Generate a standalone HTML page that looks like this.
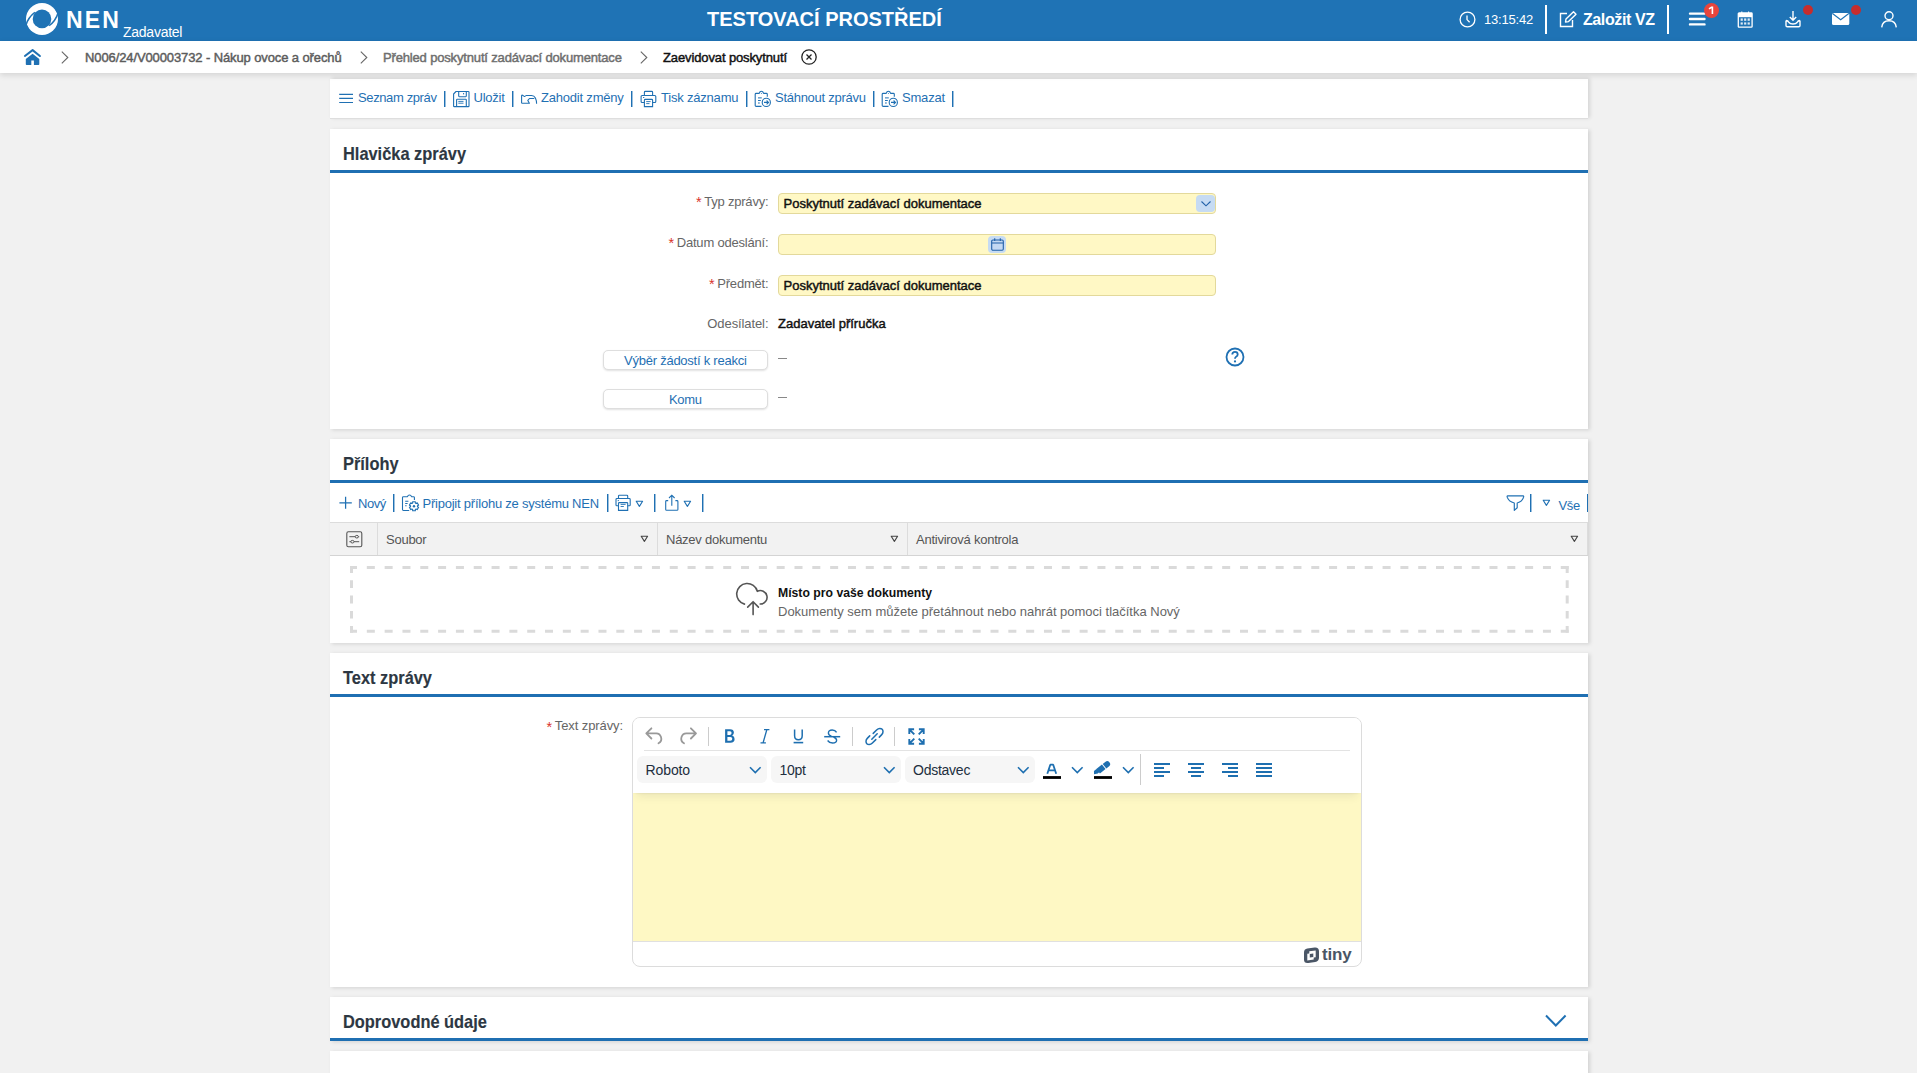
<!DOCTYPE html>
<html lang="cs">
<head>
<meta charset="utf-8">
<title>NEN</title>
<style>
*{box-sizing:border-box;margin:0;padding:0}
html,body{width:1917px;height:1073px;overflow:hidden}
body{background:#f1f1f1;font-family:"Liberation Sans",sans-serif;color:#222;position:relative}
.a{position:absolute}
.t{position:absolute;line-height:1;white-space:nowrap;z-index:3}
svg{position:absolute;overflow:visible}
#hdr{left:0;top:0;width:1917px;height:41px;background:#1f73b5}
#bc{left:0;top:41px;width:1917px;height:32px;background:#fff;box-shadow:0 2px 6px rgba(0,0,0,.13);z-index:2}
.card{position:absolute;left:330px;width:1258px;background:#fff;box-shadow:1.5px 1px 4px rgba(0,0,0,.13)}
.sec{font-size:18.5px;font-weight:bold;color:#2d3742;-webkit-text-stroke:0.15px #2d3742;transform:scaleX(.886);transform-origin:0 0}
.med{-webkit-text-stroke:0.45px currentColor}
.bl{position:absolute;left:0;width:1258px;height:3px;background:#1f6fb2}
.lnk{color:#1f70b3;font-size:13px}
.sep{position:absolute;width:1px;height:16px;background:#1f70b3;box-shadow:1px 0 0 rgba(31,112,179,.45);z-index:3}
.lbl{color:#666;font-size:13px}
.req{color:#d9342b;font-size:14.5px;margin-right:2.6px;letter-spacing:0;position:relative;top:1.3px;line-height:0}
.inp{position:absolute;left:778px;width:438px;height:21px;background:#fff8c5;border:1px solid #e3d99b;border-radius:4px}
.btn{position:absolute;left:603px;width:165px;height:19.6px;background:#fff;border:1px solid #dedede;border-radius:5px;box-shadow:0 1px 2px rgba(0,0,0,.12)}
</style>
</head>
<body>
<!-- HEADER -->
<div id="hdr" class="a">
  <svg width="40" height="40" style="left:22px;top:0px" viewBox="0 0 40 40">
    <circle cx="20" cy="19" r="16" fill="#fff"/>
    <circle cx="20" cy="18.9" r="9.3" fill="#1f73b5"/>
    <path d="M3.8 25.5 Q6.3 17 12.9 12.3" stroke="#1f73b5" stroke-width="1.5" fill="none"/>
    <path d="M36.2 12.5 Q33.7 21 27.1 25.7" stroke="#1f73b5" stroke-width="1.5" fill="none"/>
    <path d="M4.3 24.2 L6.9 28.4 L1 29 Z M35.7 13.8 L33.1 9.6 L39 9 Z" fill="#1f73b5"/>
  </svg>
  <span class="t" style="left:66px;top:8.5px;font-size:23px;font-weight:bold;color:#fff;letter-spacing:2.2px">NEN</span>
  <span class="t" style="left:123px;top:25px;font-size:14px;color:#fff;letter-spacing:-0.25px">Zadavatel</span>
  <span class="t" style="left:707px;top:8.5px;font-size:20px;font-weight:bold;color:#fff;letter-spacing:0px">TESTOVACÍ PROSTŘEDÍ</span>
  <!-- clock -->
  <svg width="17" height="17" style="left:1459px;top:11px" viewBox="0 0 17 17"><circle cx="8.5" cy="8.5" r="7.4" stroke="#fff" stroke-width="1.3" fill="none"/><path d="M8 4.5 V8.6 L10.6 11.3" stroke="#fff" stroke-width="1.3" fill="none"/></svg>
  <span class="t" style="left:1484px;top:13px;font-size:13px;color:#fff;letter-spacing:-0.2px">13:15:42</span>
  <div class="a" style="left:1545px;top:5px;width:2px;height:29px;background:#fff"></div>
  <!-- edit -->
  <svg width="18" height="17" style="left:1559px;top:11px" viewBox="0 0 18 17"><path d="M8 2.5 H1.5 V15.5 H13.5 V9" stroke="#fff" stroke-width="1.4" fill="none"/><path d="M6.5 11 L7 8 L14.5 0.8 L17 3.3 L9.5 10.6 Z" stroke="#fff" stroke-width="1.4" fill="none" stroke-linejoin="round"/></svg>
  <span class="t" style="left:1583px;top:11.5px;font-size:16px;font-weight:bold;color:#fff;letter-spacing:-0.4px">Založit VZ</span>
  <div class="a" style="left:1667px;top:5px;width:2px;height:29px;background:#fff"></div>
  <!-- hamburger -->
  <svg width="17" height="15" style="left:1689px;top:12px" viewBox="0 0 17 15"><path d="M1 1.6 H15.5 M1 7 H15.5 M1 12.4 H15.5" stroke="#fff" stroke-width="2.4" stroke-linecap="round"/></svg>
  <div class="a" style="left:1704px;top:3px;width:15px;height:15px;border-radius:50%;background:#e8453c"></div>
  <svg width="15" height="15" style="left:1704px;top:3px" viewBox="0 0 15 15"><path d="M5 5.9 L7.5 4.3 H8.4 V11" stroke="#fff" stroke-width="1.6" fill="none" stroke-linejoin="miter"/></svg>
  <!-- calendar -->
  <svg width="17" height="17" style="left:1736.5px;top:10.5px" viewBox="0 0 17 17"><path d="M1.3 2.8 Q1.3 2 2.1 2 H14.3 Q15.1 2 15.1 2.8 V15.4 Q15.1 16.2 14.3 16.2 H2.1 Q1.3 16.2 1.3 15.4 Z" stroke="#fff" stroke-width="1.3" fill="none"/><rect x="1.3" y="2" width="13.8" height="4.2" fill="#fff"/><path d="M4.8 0.4 V3.4 M11.6 0.4 V3.4" stroke="#fff" stroke-width="1.1"/><path d="M4.8 2 V3.2 M11.6 2 V3.2" stroke="#1f73b5" stroke-width="2.2" opacity="0"/><g fill="#fff" opacity=".85"><rect x="3.6" y="7.4" width="2.2" height="2.4"/><rect x="7.1" y="7.4" width="2.2" height="2.4"/><rect x="10.6" y="7.4" width="2.2" height="2.4"/><rect x="3.6" y="11.4" width="2.2" height="2.2"/><rect x="7.1" y="11.4" width="2.2" height="2.2"/><rect x="10.6" y="11.4" width="2.2" height="2.2"/></g></svg>
  <!-- download -->
  <svg width="17" height="17" style="left:1785px;top:11px" viewBox="0 0 17 17"><path d="M8 0 V9 M4.8 6 L8 9.2 L11.2 6" stroke="#fff" stroke-width="1.4" fill="none"/><path d="M1 9.5 V14.5 Q1 15.8 2.3 15.8 H13.7 Q15 15.8 15 14.5 V9.5 M1 9.5 Q3 9.5 4 11.5 Q5 13 8 13 Q11 13 12 11.5 Q13 9.5 15 9.5" stroke="#fff" stroke-width="1.4" fill="none"/></svg>
  <div class="a" style="left:1803px;top:5px;width:10px;height:10px;border-radius:50%;background:#c62d2d"></div>
  <!-- mail -->
  <svg width="18" height="13" style="left:1832px;top:13px" viewBox="0 0 18 13"><rect x="0" y="0" width="17.3" height="12" rx="1.5" fill="#fff"/><path d="M0.5 0.5 L8.65 6.7 L16.8 0.5" stroke="#1f73b5" stroke-width="1.1" fill="none"/></svg>
  <div class="a" style="left:1851px;top:5px;width:10px;height:10px;border-radius:50%;background:#c62d2d"></div>
  <!-- user -->
  <svg width="16" height="17" style="left:1881px;top:11px" viewBox="0 0 16 17"><circle cx="8" cy="4.8" r="4" stroke="#fff" stroke-width="1.4" fill="none"/><path d="M0.7 16.3 Q1.5 9.8 8 9.8 Q14.5 9.8 15.3 16.3" stroke="#fff" stroke-width="1.4" fill="none"/></svg>
</div>

<!-- BREADCRUMB -->
<div id="bc" class="a">
  <svg width="17" height="17" style="left:23.5px;top:7.5px" viewBox="0 0 17 17"><path d="M0.9 7 L8.6 1.1 L15.9 7" stroke="#1f70b3" stroke-width="2" fill="none" stroke-linecap="round" stroke-linejoin="round"/><path d="M8.6 4.8 L15.3 10 V15.3 Q15.3 16.1 14.5 16.1 H9.9 V11.4 H7.3 V16.1 H2.6 Q1.8 16.1 1.8 15.3 V10 Z" fill="#1f70b3"/></svg>
  <svg width="8" height="13" style="left:61px;top:9.6px" viewBox="0 0 8 13"><path d="M0.8 0.6 L6.8 6.5 L0.8 12.4" stroke="#666" stroke-width="1.1" fill="none"/></svg>
  <span class="t med" style="left:85px;top:10px;font-size:13px;color:#5c5c5c;letter-spacing:-0.11px">N006/24/V00003732 - Nákup ovoce a ořechů</span>
  <svg width="8" height="13" style="left:359.5px;top:9.6px" viewBox="0 0 8 13"><path d="M0.8 0.6 L6.8 6.5 L0.8 12.4" stroke="#666" stroke-width="1.1" fill="none"/></svg>
  <span class="t med" style="left:383px;top:10px;font-size:13px;color:#6e6e6e;letter-spacing:-0.16px">Přehled poskytnutí zadávací dokumentace</span>
  <svg width="8" height="13" style="left:639.5px;top:9.6px" viewBox="0 0 8 13"><path d="M0.8 0.6 L6.8 6.5 L0.8 12.4" stroke="#666" stroke-width="1.1" fill="none"/></svg>
  <span class="t med" style="left:663px;top:10px;font-size:13px;color:#111;letter-spacing:-0.12px">Zaevidovat poskytnutí</span>
  <svg width="17" height="17" style="left:801px;top:8px" viewBox="0 0 17 17"><circle cx="8" cy="8" r="7.2" stroke="#222" stroke-width="1.3" fill="none"/><path d="M5.5 5.5 L10.5 10.5 M10.5 5.5 L5.5 10.5" stroke="#222" stroke-width="1.3"/></svg>
</div>

<!-- CARDS -->
<div class="card" style="top:79px;height:40px;border-bottom:1px solid #dedede;box-shadow:1.5px -1px 4px rgba(0,0,0,.12)" id="tb"></div>
<div class="card" style="top:129px;height:300px" id="c1"></div>
<div class="card" style="top:439px;height:204px" id="c2"></div>
<div class="card" style="top:653px;height:334px" id="c3"></div>
<div class="card" style="top:997px;height:44px" id="c4"></div>
<div class="card" style="top:1051px;height:40px" id="c5"></div>

<!-- TOOLBAR -->
<svg width="16" height="12" style="left:338px;top:92px;z-index:3" viewBox="0 0 16 12"><path d="M1.2 2.3 H15 M1.2 6.4 H15 M1.2 10.5 H15" stroke="#1f70b3" stroke-width="1.2"/></svg>
<span class="t lnk" style="left:358px;top:91px;letter-spacing:-0.38px">Seznam zpráv</span>
<div class="sep" style="left:444px;top:90.5px"></div>
<svg width="18" height="18" style="left:452px;top:90px;z-index:3" viewBox="0 0 18 18"><path d="M4 1.5 H16.3 Q17 1.5 17 2.2 V15.9 Q17 16.6 16.3 16.6 H2.3 Q1.6 16.6 1.6 15.9 V4 Z" stroke="#1f70b3" stroke-width="1.1" fill="none" stroke-linejoin="round"/><path d="M6.7 1.5 V6.1 Q6.7 6.7 7.3 6.7 H13.7 Q14.3 6.7 14.3 6.1 V1.5" stroke="#1f70b3" stroke-width="1.1" fill="none"/><path d="M11.6 3 V4.4" stroke="#1f70b3" stroke-width="1"/><path d="M4.6 16.6 V9.9 Q4.6 9.3 5.2 9.3 H13.7 Q14.3 9.3 14.3 9.9 V16.6" stroke="#1f70b3" stroke-width="1.1" fill="none"/><path d="M6.3 11.4 H11.5 M6.3 13.2 H11.5" stroke="#1f70b3" stroke-width="0.9"/></svg>
<span class="t lnk" style="left:473.5px;top:91px;letter-spacing:-0.25px">Uložit</span>
<div class="sep" style="left:512px;top:90.5px"></div>
<svg width="22" height="18" style="left:518px;top:90px;z-index:3" viewBox="0 0 22 18"><path d="M3.6 13.2 V5.8 Q3.6 4.9 4.5 5.2 L6.3 6.4 Q7.1 6.7 8.1 5.5 H13.5 Q16.2 5.6 17.4 8 Q18.6 10.5 18.6 13.8 M3.6 13.2 H11.4 L9.8 10.4 L11.5 8.5 H16.3" stroke="#1f70b3" stroke-width="1.1" fill="none" stroke-linejoin="round"/></svg>
<span class="t lnk" style="left:541px;top:91px;letter-spacing:-0.2px">Zahodit změny</span>
<div class="sep" style="left:631px;top:90.5px"></div>
<svg width="24" height="20" style="left:636px;top:88px;z-index:3" viewBox="0 0 24 20"><path d="M8.4 7.4 V4.3 Q8.4 3.4 9.3 3.4 H15.7 Q16.6 3.4 16.6 4.3 V7.4" stroke="#1f70b3" stroke-width="1.1" fill="none"/><path d="M8.4 14.5 H6.1 Q5.1 14.5 5.1 13.5 V8.5 Q5.1 7.5 6.1 7.5 H18.8 Q19.8 7.5 19.8 8.5 V13.5 Q19.8 14.5 18.8 14.5 H16.6" stroke="#1f70b3" stroke-width="1.1" fill="none"/><path d="M8.4 18.6 V12.3 Q8.4 11.4 9.3 11.4 H15.7 Q16.6 11.4 16.6 12.3 V18.6 Z" stroke="#1f70b3" stroke-width="1.1" fill="none"/><path d="M10.2 13.6 H14.6 M10.2 15.6 H13.5 M7 9.5 H8.3" stroke="#1f70b3" stroke-width="0.9"/></svg>
<span class="t lnk" style="left:661px;top:91px;letter-spacing:-0.2px">Tisk záznamu</span>
<div class="sep" style="left:746px;top:90.5px"></div>
<svg width="24" height="24" style="left:750px;top:86px;z-index:3" viewBox="0 0 24 24" id="clip1"><path d="M17.3 10.8 V8.3 Q17.3 7.4 16.4 7.4 H13.6 Q13 5.3 11.4 5.3 Q9.8 5.3 9.2 7.4 H6.1 Q5.2 7.4 5.2 8.3 V19.6 Q5.2 20.4 6.1 20.4 H11.5" stroke="#1f70b3" stroke-width="1.1" fill="none" stroke-linejoin="round"/><circle cx="11.4" cy="7.5" r="0.5" fill="#1f70b3"/><path d="M8 11.9 H11.8 M8 14.5 H10.8 M8 17 H9.8" stroke="#1f70b3" stroke-width="1"/><circle cx="16.3" cy="16.4" r="4.1" stroke="#1f70b3" stroke-width="1.1" fill="none"/><path d="M14 16.4 H18.3 M16.6 14.5 L18.5 16.4 L16.6 18.3" stroke="#1f70b3" stroke-width="1.1" fill="none"/></svg>
<span class="t lnk" style="left:775px;top:91px;letter-spacing:-0.27px">Stáhnout zprávu</span>
<div class="sep" style="left:873px;top:90.5px"></div>
<svg width="24" height="24" style="left:877.3px;top:86px;z-index:3" viewBox="0 0 24 24"><path d="M17.3 10.8 V8.3 Q17.3 7.4 16.4 7.4 H13.6 Q13 5.3 11.4 5.3 Q9.8 5.3 9.2 7.4 H6.1 Q5.2 7.4 5.2 8.3 V19.6 Q5.2 20.4 6.1 20.4 H11.5" stroke="#1f70b3" stroke-width="1.1" fill="none" stroke-linejoin="round"/><circle cx="11.4" cy="7.5" r="0.5" fill="#1f70b3"/><path d="M8 11.9 H11.8 M8 14.5 H10.8 M8 17 H9.8" stroke="#1f70b3" stroke-width="1"/><circle cx="16.3" cy="16.4" r="4.1" stroke="#1f70b3" stroke-width="1.1" fill="none"/><path d="M14 16.4 H18.3 M16.6 14.5 L18.5 16.4 L16.6 18.3" stroke="#1f70b3" stroke-width="1.1" fill="none"/></svg>
<span class="t lnk" style="left:902px;top:91px;letter-spacing:-0.2px">Smazat</span>
<div class="sep" style="left:952px;top:90.5px"></div>

<!-- SECTION 1 -->
<span class="t sec" style="left:342.5px;top:144.8px">Hlavička zprávy</span>
<div class="a bl" style="left:330px;top:170px;z-index:3"></div>
<span class="t lbl" style="right:1148.6px;top:194.6px;letter-spacing:-0.2px"><span class="req">*</span>Typ zprávy:</span>
<div class="inp" style="top:193px;z-index:3"><div class="a" style="left:417px;top:1px;width:19px;height:17px;background:#c6dbf3;border-radius:4px"></div>
<svg width="12" height="8" style="left:421px;top:6px" viewBox="0 0 12 8"><path d="M1.5 1.5 L6 5.8 L10.5 1.5" stroke="#2161a8" stroke-width="1.15" fill="none"/></svg></div>
<span class="t med" style="left:783.5px;top:197px;font-size:13px;color:#111;letter-spacing:0px">Poskytnutí zadávací dokumentace</span>
<span class="t lbl" style="right:1148.6px;top:235.6px;letter-spacing:-0.2px"><span class="req">*</span>Datum odeslání:</span>
<div class="inp" style="top:234px;z-index:3"><div class="a" style="left:209px;top:1px;width:18px;height:17px;background:#c6dbf3;border-radius:4px"></div>
<svg width="13" height="13" style="left:212px;top:3px" viewBox="0 0 13 13"><rect x="0.7" y="2" width="11.6" height="10.3" rx="1.2" fill="#c4d9f3" stroke="#2161a8" stroke-width="1.1"/><path d="M0.7 5 H12.3 M3.7 0.3 V3 M9.3 0.3 V3" stroke="#2161a8" stroke-width="1.1"/></svg></div>
<span class="t lbl" style="right:1148.6px;top:276.6px;letter-spacing:-0.2px"><span class="req">*</span>Předmět:</span>
<div class="inp" style="top:275px;z-index:3"></div>
<span class="t med" style="left:783.5px;top:279px;font-size:13px;color:#111;letter-spacing:0px">Poskytnutí zadávací dokumentace</span>
<span class="t lbl" style="right:1148.6px;top:316.8px;letter-spacing:-0.1px">Odesílatel:</span>
<span class="t med" style="left:778px;top:317px;font-size:13px;color:#111;letter-spacing:0px">Zadavatel příručka</span>
<div class="btn" style="top:350px;z-index:3"></div>
<span class="t lnk" style="left:624px;top:354px;letter-spacing:-0.24px">Výběr žádostí k reakci</span>
<div class="a" style="left:778px;top:358px;width:9px;height:1px;background:#888;z-index:3"></div>
<svg width="20" height="20" style="left:1225px;top:347px;z-index:3" viewBox="0 0 20 20"><circle cx="10" cy="10" r="8.5" stroke="#1f70b3" stroke-width="1.8" fill="none"/><path d="M7.3 7.6 Q7.3 4.9 10 4.9 Q12.7 4.9 12.7 7.4 Q12.7 8.9 11.1 9.7 Q10 10.3 10 11.8" stroke="#1f70b3" stroke-width="1.8" fill="none"/><circle cx="10" cy="14.4" r="1.1" fill="#1f70b3"/></svg>
<div class="btn" style="top:389px;z-index:3"></div>
<span class="t lnk" style="left:669px;top:393px;letter-spacing:-0.3px">Komu</span>
<div class="a" style="left:778px;top:397px;width:9px;height:1px;background:#888;z-index:3"></div>

<!-- SECTION 2 -->
<span class="t sec" style="left:342.5px;top:454.8px">Přílohy</span>
<div class="a bl" style="left:330px;top:480px;z-index:3"></div>
<svg width="14" height="14" style="left:339px;top:496px;z-index:3" viewBox="0 0 14 14"><path d="M6.6 0.8 V12.8 M0.4 6.8 H12.8" stroke="#1f70b3" stroke-width="1.25"/></svg>
<span class="t lnk" style="left:358px;top:497.3px;letter-spacing:-0.45px">Nový</span>
<div class="sep" style="left:393px;top:494px;height:18px"></div>
<svg width="20" height="20" style="left:400px;top:493px;z-index:3" viewBox="0 0 20 20"><path d="M14.4 7 V4.6 Q14.4 3.7 13.5 3.7 H11.5 Q11 2 9.5 2 Q8 2 7.5 3.7 H3.4 Q2.5 3.7 2.5 4.6 V16.6 Q2.5 17.5 3.4 17.5 H9.2" stroke="#1f70b3" stroke-width="1.1" fill="none" stroke-linejoin="round"/><path d="M5.2 8.2 H8.4 M5.2 10.5 H7.6 M5.2 12.8 H6.6" stroke="#1f70b3" stroke-width="1.1"/><path d="M12.63 8.71 L15.37 8.71 L15.31 9.95 L16.15 10.44 L17.21 9.76 L18.58 12.14 L17.47 12.71 L17.47 13.69 L18.58 14.26 L17.21 16.64 L16.15 15.96 L15.31 16.45 L15.37 17.69 L12.63 17.69 L12.69 16.45 L11.85 15.96 L10.79 16.64 L9.42 14.26 L10.53 13.69 L10.53 12.71 L9.42 12.14 L10.79 9.76 L11.85 10.44 L12.69 9.95 Z" stroke="#1f70b3" stroke-width="1.1" fill="#fff" stroke-linejoin="round"/><circle cx="14" cy="13.2" r="1.2" fill="#1f70b3"/></svg>
<span class="t lnk" style="left:422.5px;top:497.3px;letter-spacing:-0.23px">Připojit přílohu ze systému NEN</span>
<div class="sep" style="left:607px;top:494px;height:18px"></div>
<svg width="18" height="18" style="left:614.5px;top:494px;z-index:3" viewBox="0 0 18 18"><path d="M3.5 4.4 V2 Q3.5 1.2 4.3 1.2 H11.9 Q12.7 1.2 12.7 2 V4.4" stroke="#1f70b3" stroke-width="1.1" fill="none"/><path d="M3.5 11.8 H1.9 Q1 11.8 1 10.9 V5.4 Q1 4.5 1.9 4.5 H14.3 Q15.2 4.5 15.2 5.4 V10.9 Q15.2 11.8 14.3 11.8 H12.7" stroke="#1f70b3" stroke-width="1.1" fill="none"/><path d="M3.5 16.4 V9.3 Q3.5 8.6 4.3 8.6 H11.9 Q12.7 8.6 12.7 9.3 V16.4 Z" stroke="#1f70b3" stroke-width="1.1" fill="none"/><path d="M5.6 10.4 H10.6 M5.6 12.5 H8.8 M2.7 6.6 H4" stroke="#1f70b3" stroke-width="0.9"/></svg>
<svg width="9" height="8" style="left:635px;top:499.5px;z-index:3" viewBox="0 0 9 8"><path d="M1.2 1.2 H7.6 L4.4 6.4 Z" stroke="#1f70b3" stroke-width="1.1" fill="none" stroke-linejoin="round"/></svg>
<div class="sep" style="left:654px;top:494px;height:18px"></div>
<svg width="16" height="18" style="left:664px;top:493px;z-index:3" viewBox="0 0 16 18"><path d="M4.2 7.6 H2.6 Q1.7 7.6 1.7 8.5 V16.5 Q1.7 17.3 2.6 17.3 H13 Q13.9 17.3 13.9 16.5 V8.5 Q13.9 7.6 13 7.6 H11.4" stroke="#1f70b3" stroke-width="1.1" fill="none"/><path d="M7.8 12.7 V2.2 M5 5 L7.8 2.2 L10.6 5" stroke="#1f70b3" stroke-width="1.1" fill="none"/></svg>
<svg width="9" height="8" style="left:683px;top:499.5px;z-index:3" viewBox="0 0 9 8"><path d="M1.2 1.2 H7.6 L4.4 6.4 Z" stroke="#1f70b3" stroke-width="1.1" fill="none" stroke-linejoin="round"/></svg>
<div class="sep" style="left:702px;top:494px;height:18px"></div>
<svg width="19" height="18" style="left:1505.5px;top:494px;z-index:3" viewBox="0 0 19 18"><path d="M1.6 1.9 H17.2 Q17.9 1.9 17.6 3.2 Q16.4 7.6 11.2 9 V13.8 L8.3 16.4 V9 Q2.6 7.6 1.2 3.2 Q0.9 1.9 1.6 1.9 Z" stroke="#1f70b3" stroke-width="1.15" fill="none" stroke-linejoin="round"/></svg>
<div class="sep" style="left:1530px;top:494px;height:18px"></div>
<svg width="9" height="8" style="left:1541.8px;top:498.8px;z-index:3" viewBox="0 0 9 8"><path d="M1.2 1.2 H7.6 L4.4 6.4 Z" stroke="#1f70b3" stroke-width="1.1" fill="none" stroke-linejoin="round"/></svg>
<span class="t lnk" style="left:1558.5px;top:499.4px;letter-spacing:-0.3px">Vše</span>
<div class="sep" style="left:1587px;top:494px;height:18px;box-shadow:none"></div>
<!-- table header -->
<div class="a" style="left:330px;top:522px;width:1258px;height:34px;background:#f2f2f2;border-top:1px solid #dcdcdc;border-bottom:1px solid #d4d4d4;z-index:3"></div>
<div class="a" style="left:377px;top:523px;width:1px;height:32px;background:#dcdcdc;z-index:3"></div>
<div class="a" style="left:657px;top:523px;width:1px;height:32px;background:#dcdcdc;z-index:3"></div>
<div class="a" style="left:907px;top:523px;width:1px;height:32px;background:#dcdcdc;z-index:3"></div>
<div class="a" style="left:1587px;top:523px;width:1px;height:32px;background:#dcdcdc;z-index:3"></div>
<svg width="17" height="17" style="left:345.7px;top:530.7px;z-index:4" viewBox="0 0 17 17"><rect x="0.8" y="0.8" width="15" height="15" rx="1.6" stroke="#555" stroke-width="1.1" fill="none"/><path d="M3.4 5.7 H9.2 M12.4 5.7 H13.2 M3.4 10.7 H4.8 M8 10.7 H13.2" stroke="#555" stroke-width="1"/><ellipse cx="10.8" cy="5.7" rx="1.6" ry="1.3" stroke="#555" stroke-width="1" fill="none"/><ellipse cx="6.4" cy="10.7" rx="1.6" ry="1.3" stroke="#555" stroke-width="1" fill="none"/></svg>
<span class="t" style="left:386px;top:532.6px;font-size:13px;color:#555;letter-spacing:-0.25px">Soubor</span>
<svg width="9" height="8" style="left:639.5px;top:535px;z-index:4" viewBox="0 0 9 8"><path d="M1.2 1.2 H7.6 L4.4 6.4 Z" stroke="#444" stroke-width="1.1" fill="none" stroke-linejoin="round"/></svg>
<span class="t" style="left:666px;top:532.6px;font-size:13px;color:#555;letter-spacing:-0.25px">Název dokumentu</span>
<svg width="9" height="8" style="left:889.5px;top:535px;z-index:4" viewBox="0 0 9 8"><path d="M1.2 1.2 H7.6 L4.4 6.4 Z" stroke="#444" stroke-width="1.1" fill="none" stroke-linejoin="round"/></svg>
<span class="t" style="left:916px;top:532.6px;font-size:13px;color:#555;letter-spacing:-0.25px">Antivirová kontrola</span>
<svg width="9" height="8" style="left:1569.5px;top:535px;z-index:4" viewBox="0 0 9 8"><path d="M1.2 1.2 H7.6 L4.4 6.4 Z" stroke="#444" stroke-width="1.1" fill="none" stroke-linejoin="round"/></svg>
<!-- drop zone -->
<svg width="1222" height="70" style="left:349px;top:565px;z-index:3" viewBox="0 0 1222 70"><g stroke="#dadada" stroke-width="3" fill="none" stroke-dasharray="8 9.82" stroke-dashoffset="1"><path d="M1 2.5 H1219.8 M1 66.2 H1219.8"/></g><path d="M2.5 1 V8 M1218.2 1 V8 M2.5 15.3 V22.9 M1218.2 15.3 V22.9 M2.5 30.4 V38.4 M1218.2 30.4 V38.4 M2.5 45.9 V53.5 M1218.2 45.9 V53.5 M2.5 61 V67.7 M1218.2 61 V67.7" stroke="#dadada" stroke-width="3" fill="none"/></svg>
<svg width="34" height="34" style="left:735px;top:582px;z-index:3" viewBox="0 0 34 34"><path d="M9.48 22.14 A10.5 10.5 0 1 1 22.35 9.32 A6.7 6.7 0 1 1 25.17 22.0" stroke="#555" stroke-width="1.6" fill="none" stroke-linecap="round" stroke-linejoin="round"/><path d="M18.1 20.2 V32.6 M12.7 25.1 L18.1 19.7 L23.4 25.1" stroke="#555" stroke-width="1.6" fill="none" stroke-linecap="round" stroke-linejoin="round"/></svg>
<span class="t" style="left:778.3px;top:586px;font-size:13px;font-weight:bold;color:#111;transform:scaleX(.94);transform-origin:0 0">Místo pro vaše dokumenty</span>
<span class="t" style="left:778px;top:605px;font-size:13px;color:#666;letter-spacing:-0.01px">Dokumenty sem můžete přetáhnout nebo nahrát pomoci tlačítka Nový</span>

<!-- SECTION 3 -->
<span class="t sec" style="left:342.5px;top:668.8px">Text zprávy</span>
<div class="a bl" style="left:330px;top:694px;z-index:3"></div>
<span class="t lbl" style="right:1294px;top:719.4px;letter-spacing:-0.1px"><span class="req">*</span>Text zprávy:</span>
<div class="a" style="left:632px;top:717px;width:730px;height:250px;border:1px solid #dcdcdc;border-radius:8px;background:#fff;z-index:3;overflow:hidden">
  <div class="a" style="left:0;top:75px;width:728px;height:148px;background:#fef8c4"></div>
  <div class="a" style="left:0;top:223px;width:728px;height:1px;background:#e0e0e0"></div>
  <div class="a" style="left:0;top:0;width:728px;height:75px;background:#fff;box-shadow:0 2px 2px -2px rgba(34,47,62,.12),0 8px 8px -4px rgba(34,47,62,.08)"></div>
  <div class="a" style="left:11px;top:31.6px;width:706px;height:1px;background:#e3e3e3"></div>
  <div class="a" style="left:4px;top:38px;width:130px;height:27px;background:#f6f6f6;border-radius:6px"></div>
  <div class="a" style="left:138px;top:38px;width:130px;height:27px;background:#f6f6f6;border-radius:6px"></div>
  <div class="a" style="left:272px;top:38px;width:130px;height:27px;background:#f6f6f6;border-radius:6px"></div>
</div>
<!-- editor icons row1 -->
<svg width="16" height="18" style="left:644.5px;top:726.5px;z-index:4" viewBox="0 0 16 18"><path d="M6.4 1.3 L1.3 6.4 L6.4 11.5 M1.6 6.4 H10.2 A5.3 5.3 0 0 1 13.5 16.3" stroke="#999" stroke-width="1.8" fill="none" stroke-linecap="round" stroke-linejoin="round"/></svg>
<svg width="16" height="18" style="left:682px;top:726.5px;z-index:4" viewBox="0 0 16 18"><path d="M8.9 1.3 L14 6.4 L8.9 11.5 M13.7 6.4 H5.1 A5.3 5.3 0 0 0 2 16.3" stroke="#999" stroke-width="1.8" fill="none" stroke-linecap="round" stroke-linejoin="round"/></svg>
<div class="a" style="left:708px;top:726.5px;width:1px;height:19px;background:#ccc;z-index:4"></div>
<svg width="12" height="15" style="left:724.3px;top:729px;z-index:4" viewBox="0 0 12 15"><path d="M1.1 0.2 H6 Q9.9 0.2 9.9 3.6 Q9.9 5.6 8.2 6.6 Q10.6 7.5 10.6 10 Q10.6 13.8 6.4 13.8 H1.1 Z M3.4 2.3 V5.9 H6 Q7.6 5.9 7.6 4.1 Q7.6 2.3 6 2.3 Z M3.4 7.9 V11.7 H6.3 Q8.3 11.7 8.3 9.8 Q8.3 7.9 6.3 7.9 Z" fill="#1e6fb0" fill-rule="evenodd"/></svg>
<svg width="10" height="15" style="left:759.5px;top:728.5px;z-index:4" viewBox="0 0 10 15"><path d="M4 0.7 H9.4 M0.5 13.8 H5.9 M6.8 0.7 L3.1 13.8" stroke="#1e6fb0" stroke-width="1.3" fill="none"/></svg>
<svg width="11" height="15" style="left:792.5px;top:728.5px;z-index:4" viewBox="0 0 11 15"><path d="M1.6 0.5 V6.8 Q1.6 10.8 5.4 10.8 Q9.2 10.8 9.2 6.8 V0.5" stroke="#1e6fb0" stroke-width="1.5" fill="none"/><path d="M0.6 13.6 H10.2" stroke="#1e6fb0" stroke-width="1.6"/></svg>
<svg width="17" height="15" style="left:823.5px;top:728.5px;z-index:4" viewBox="0 0 17 15"><path d="M12.6 3.4 Q11.2 1 8.2 1 Q4.4 1 4.4 3.9 Q4.4 6 7.4 7.1 M9.5 8 Q12.6 9.2 12.6 11.3 Q12.6 14 8.6 14 Q5.3 14 3.6 11.5" stroke="#1e6fb0" stroke-width="1.4" fill="none"/><path d="M0.2 7.7 H16.2" stroke="#1e6fb0" stroke-width="1.5"/></svg>
<div class="a" style="left:852px;top:726.5px;width:1px;height:19px;background:#ccc;z-index:4"></div>
<svg width="19" height="19" style="left:864.5px;top:726.5px;z-index:4" viewBox="0 0 19 19"><path d="M8.2 6.4 L11.6 3 Q13.1 1.5 14.8 1.5 Q16.4 1.5 17.2 2.3 Q18 3.1 18 4.7 Q18 6.4 16.5 7.9 L14.3 10.1 M10.8 12.6 L7.4 16 Q5.9 17.5 4.2 17.5 Q2.6 17.5 1.8 16.7 Q1 15.9 1 14.3 Q1 12.6 2.5 11.1 L4.7 8.9 M6.8 12.2 L12.2 6.8" stroke="#1e6fb0" stroke-width="1.5" fill="none" stroke-linecap="round"/></svg>
<div class="a" style="left:894px;top:726.5px;width:1px;height:19px;background:#ccc;z-index:4"></div>
<svg width="17" height="17" style="left:907.5px;top:727.5px;z-index:4" viewBox="0 0 17 17"><path d="M1.3 6.1 V1.3 H6.1 M10.9 1.3 H15.7 V6.1 M15.7 10.9 V15.7 H10.9 M6.1 15.7 H1.3 V10.9 M1.8 1.8 L6.3 6.3 M15.2 1.8 L10.7 6.3 M15.2 15.2 L10.7 10.7 M1.8 15.2 L6.3 10.7" stroke="#1e6fb0" stroke-width="1.9" fill="none"/></svg>
<!-- row2 -->
<span class="t" style="left:645.5px;top:763.3px;font-size:14px;color:#222f3e;letter-spacing:-0.1px">Roboto</span>
<svg width="13" height="8" style="left:748.5px;top:766px;z-index:4" viewBox="0 0 13 8"><path d="M1 1.2 L6.3 6.5 L11.6 1.2" stroke="#1e6fb0" stroke-width="1.6" fill="none"/></svg>
<span class="t" style="left:779.5px;top:763.3px;font-size:14px;color:#222f3e;letter-spacing:-0.3px">10pt</span>
<svg width="13" height="8" style="left:882.5px;top:766px;z-index:4" viewBox="0 0 13 8"><path d="M1 1.2 L6.3 6.5 L11.6 1.2" stroke="#1e6fb0" stroke-width="1.6" fill="none"/></svg>
<span class="t" style="left:913px;top:763.3px;font-size:14px;color:#222f3e;letter-spacing:-0.25px">Odstavec</span>
<svg width="13" height="8" style="left:1016.5px;top:766px;z-index:4" viewBox="0 0 13 8"><path d="M1 1.2 L6.3 6.5 L11.6 1.2" stroke="#1e6fb0" stroke-width="1.6" fill="none"/></svg>
<svg width="20" height="17" style="left:1042px;top:763px;z-index:4" viewBox="0 0 20 17"><path d="M5.3 10.8 L8.3 1.7 H11.2 L14.2 10.8 M6.6 7.3 H12.9" stroke="#1e6fb0" stroke-width="1.8" fill="none" stroke-linejoin="bevel"/><rect x="1" y="13.1" width="18" height="2.8" fill="#000"/></svg>
<svg width="13" height="8" style="left:1070.5px;top:766px;z-index:4" viewBox="0 0 13 8"><path d="M1 1.2 L6.3 6.5 L11.6 1.2" stroke="#1e6fb0" stroke-width="1.6" fill="none"/></svg>
<svg width="20" height="18" style="left:1093px;top:761px;z-index:4" viewBox="0 0 20 18"><path d="M9.72 2.91 L12.55 0.66 Q14.59 -0.97 16.40 1.30 Q18.21 3.57 16.16 5.19 L13.33 7.45 Z M3.31 8.02 L8.94 3.53 L12.55 8.07 L6.92 12.55 Z M3.46 7.89 L6.17 11.30 L4.76 12.42 L1.01 13.17 L0.96 9.89 Z" fill="#1e6fb0"/><rect x="1" y="15.1" width="18" height="2.8" fill="#000"/></svg>
<svg width="13" height="8" style="left:1121.5px;top:766px;z-index:4" viewBox="0 0 13 8"><path d="M1 1.2 L6.3 6.5 L11.6 1.2" stroke="#1e6fb0" stroke-width="1.6" fill="none"/></svg>
<div class="a" style="left:1140px;top:754px;width:1px;height:31px;background:#ccc;z-index:4"></div>
<svg width="18" height="15" style="left:1153px;top:762px;z-index:4" viewBox="0 0 18 15"><path d="M1 2 H17 M1 6 H11 M1 10 H17 M1 14 H11" stroke="#1e6fb0" stroke-width="1.9"/></svg>
<svg width="18" height="15" style="left:1187px;top:762px;z-index:4" viewBox="0 0 18 15"><path d="M1 2 H17 M4 6 H14 M1 10 H17 M4 14 H14" stroke="#1e6fb0" stroke-width="1.9"/></svg>
<svg width="18" height="15" style="left:1221px;top:762px;z-index:4" viewBox="0 0 18 15"><path d="M1 2 H17 M7 6 H17 M1 10 H17 M7 14 H17" stroke="#1e6fb0" stroke-width="1.9"/></svg>
<svg width="18" height="15" style="left:1255px;top:762px;z-index:4" viewBox="0 0 18 15"><path d="M1 2 H17 M1 6 H17 M1 10 H17 M1 14 H17" stroke="#1e6fb0" stroke-width="1.9"/></svg>
<!-- tiny -->
<svg width="17" height="17" style="left:1302.5px;top:946.5px;z-index:4" viewBox="0 0 17 17"><path d="M4.3 1.5 L11.7 0.6 Q16 0.3 16 4.5 V10.5 Q16 14.3 12.2 15 L5.4 16 Q1 16.6 1 12.5 V5.5 Q1 2 4.3 1.5 Z" fill="#4a5666"/><path d="M6.3 4.3 L12.7 3.5 V10.2 L10.7 10.5 V12.6 L4.3 13.4 V6.8 L6.3 6.5 Z" fill="#fff"/><path d="M6.8 7 L10.3 6.6 V10 L6.8 10.4 Z" fill="#4a5666"/></svg>
<span class="t" style="left:1322px;top:945.8px;font-size:17px;font-weight:bold;color:#4a5666;letter-spacing:-0.2px">tiny</span>

<!-- SECTION 4 -->
<span class="t sec" style="left:342.5px;top:1012.8px">Doprovodné údaje</span>
<div class="a bl" style="left:330px;top:1038px;z-index:3"></div>
<svg width="22" height="14" style="left:1545px;top:1013.5px;z-index:3" viewBox="0 0 22 14"><path d="M1 1.5 L10.8 11.5 L20.6 1.5" stroke="#1f70b3" stroke-width="2" fill="none"/></svg>

</body>
</html>
